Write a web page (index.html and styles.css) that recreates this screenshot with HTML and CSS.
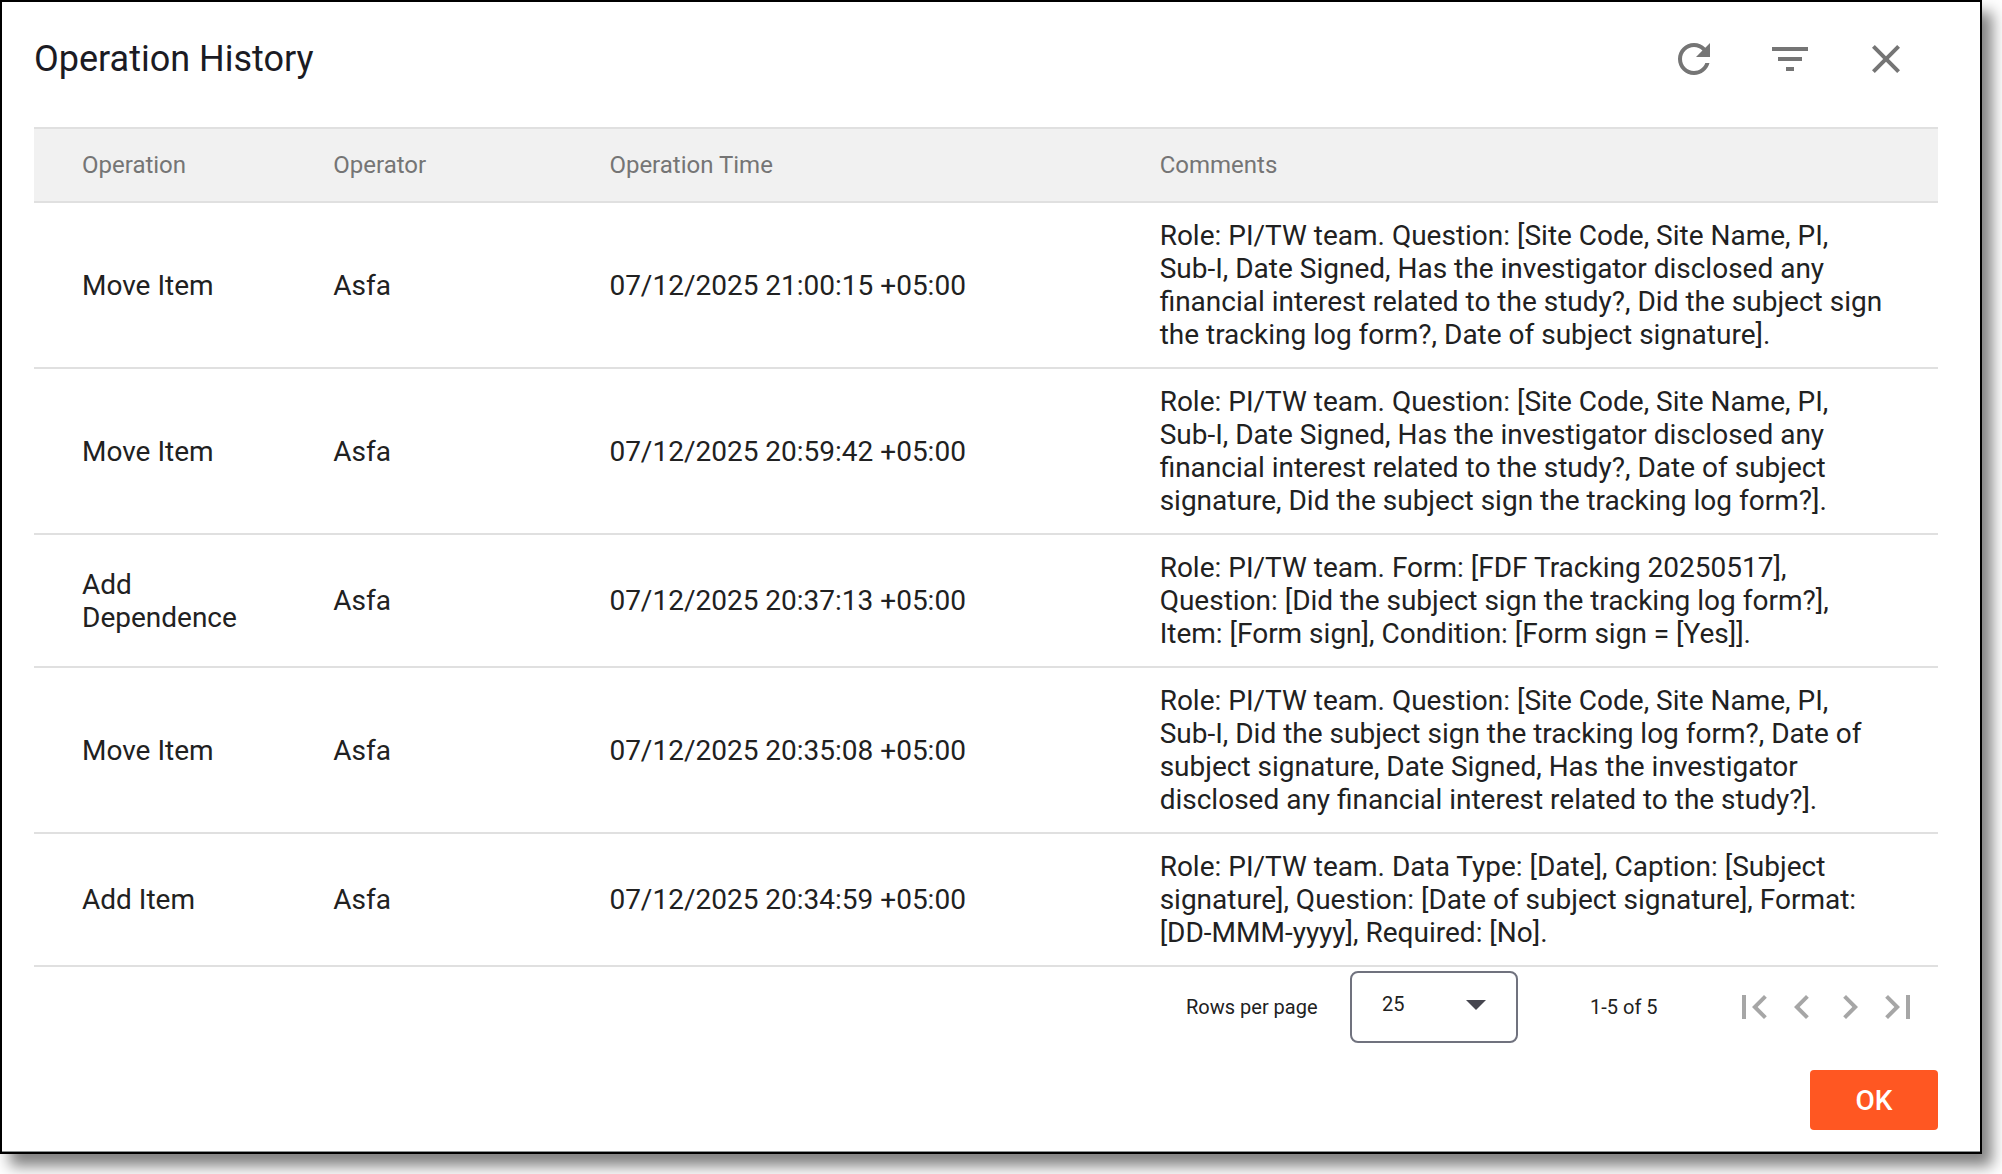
FILE: index.html
```html
<!DOCTYPE html>
<html lang="en">
<head>
<meta charset="utf-8">
<title>Operation History</title>
<link rel="stylesheet" href="styles.css">
</head>
<body>
<main class="dialog">
  <header class="dialog-header">
    <h1 class="dialog-title">Operation History</h1>
    <div class="dialog-tools">
      <button class="icon-button" type="button" aria-label="Refresh"><svg class="icon" viewBox="0 0 24 24"><path d="M17.65 6.35C16.2 4.9 14.21 4 12 4c-4.42 0-7.99 3.58-8 8s3.58 8 8 8c3.73 0 6.84-2.55 7.73-6h-2.08c-.82 2.33-3.04 4-5.65 4-3.31 0-6-2.69-6-6s2.69-6 6-6c1.66 0 3.14.69 4.22 1.78L13 11h7V4l-2.35 2.35z"/></svg></button>
      <button class="icon-button" type="button" aria-label="Filter"><svg class="icon" viewBox="0 0 24 24"><path d="M10 18h4v-2h-4v2zM3 6v2h18V6H3zm3 7h12v-2H6v2z"/></svg></button>
      <button class="icon-button" type="button" aria-label="Close"><svg class="icon" viewBox="0 0 24 24"><path d="M19 6.41L17.59 5 12 10.59 6.41 5 5 6.41 10.59 12 5 17.59 6.41 19 12 13.41 17.59 19 19 17.59 13.41 12z"/></svg></button>
    </div>
  </header>

  <table class="history">
    <colgroup>
      <col class="col-operation"><col class="col-operator"><col class="col-time"><col class="col-comments">
    </colgroup>
    <thead>
      <tr><th scope="col">Operation</th><th scope="col">Operator</th><th scope="col">Operation Time</th><th scope="col">Comments</th></tr>
    </thead>
    <tbody>
      <tr>
        <td>Move Item</td><td>Asfa</td><td>07/12/2025 21:00:15 +05:00</td>
        <td>Role: PI/TW team. Question: [Site Code, Site Name, PI, Sub-I, Date Signed, Has the investigator disclosed any financial interest related to the study?, Did the subject sign the tracking log form?, Date of subject signature].</td>
      </tr>
      <tr>
        <td>Move Item</td><td>Asfa</td><td>07/12/2025 20:59:42 +05:00</td>
        <td>Role: PI/TW team. Question: [Site Code, Site Name, PI, Sub-I, Date Signed, Has the investigator disclosed any financial interest related to the study?, Date of subject signature, Did the subject sign the tracking log form?].</td>
      </tr>
      <tr>
        <td>Add Dependence</td><td>Asfa</td><td>07/12/2025 20:37:13 +05:00</td>
        <td>Role: PI/TW team. Form: [FDF Tracking 20250517], Question: [Did the subject sign the tracking log form?], Item: [Form sign], Condition: [Form sign = [Yes]].</td>
      </tr>
      <tr>
        <td>Move Item</td><td>Asfa</td><td>07/12/2025 20:35:08 +05:00</td>
        <td>Role: PI/TW team. Question: [Site Code, Site Name, PI, Sub-I, Did the subject sign the tracking log form?, Date of subject signature, Date Signed, Has the investigator disclosed any financial interest related to the study?].</td>
      </tr>
      <tr>
        <td>Add Item</td><td>Asfa</td><td>07/12/2025 20:34:59 +05:00</td>
        <td>Role: PI/TW team. Data Type: [Date], Caption: [Subject signature], Question: [Date of subject signature], Format: [DD-MMM-yyyy], Required: [No].</td>
      </tr>
    </tbody>
  </table>

  <nav class="pagination" aria-label="Pagination">
    <label class="page-label" for="page-size">Rows per page</label>
    <div class="page-size">
      <select class="page-select" id="page-size"><option>25</option><option>50</option><option>100</option></select>
      <svg class="page-arrow" viewBox="0 0 20 10"><path d="M0 0h20L10 10z"/></svg>
    </div>
    <span class="page-range">1-5 of 5</span>
    <div class="page-nav">
      <button class="page-button" type="button" aria-label="First page" disabled><svg class="icon" viewBox="0 0 24 24"><path d="M18.41 16.59L13.82 12l4.59-4.59L17 6l-6 6 6 6zM6 6h2v12H6z"/></svg></button>
      <button class="page-button" type="button" aria-label="Previous page" disabled><svg class="icon" viewBox="0 0 24 24"><path d="M15.41 7.41L14 6l-6 6 6 6 1.41-1.41L10.83 12z"/></svg></button>
      <button class="page-button" type="button" aria-label="Next page" disabled><svg class="icon" viewBox="0 0 24 24"><path d="M10 6L8.59 7.41 13.17 12l-4.58 4.59L10 18l6-6z"/></svg></button>
      <button class="page-button" type="button" aria-label="Last page" disabled><svg class="icon" viewBox="0 0 24 24"><path d="M5.59 7.41L10.18 12l-4.59 4.59L7 18l6-6-6-6zM16 6h2v12h-2z"/></svg></button>
    </div>
  </nav>

  <footer class="dialog-footer">
    <button class="ok-button" type="button">OK</button>
  </footer>
</main>
</body>
</html>
```
FILE: styles.css
```css
* {
  box-sizing: border-box;
}

body {
  margin: 0;
  padding: 0 20px 20px 0;
  background: #fff;
  color: #212121;
  font-family: Roboto, "Liberation Sans", sans-serif;
  font-size: 28px;
  line-height: 33px;
}

button,
select {
  margin: 0;
  font-family: inherit;
}

.dialog {
  padding: 9px 42px 22px 32px;
  border: 2px solid #000;
  background: #fff;
  box-shadow: inset 0 -1px #8b9090, 10px 12px 14px rgba(0, 0, 0, 0.5);
}

.dialog-header {
  display: flex;
  align-items: center;
  justify-content: space-between;
  padding-right: 4px;
  margin-bottom: 20px;
}

.dialog-title {
  margin: 0;
  color: #1b1b23;
  font-size: 36px;
  font-weight: 400;
  line-height: 42px;
}

.dialog-tools,
.page-nav {
  display: flex;
}

.icon-button,
.page-button {
  display: grid;
  place-items: center;
  padding: 0;
  border: 0;
  background: none;
}

.icon-button {
  width: 96px;
  height: 96px;
  color: #757575;
}

.page-button {
  width: 48px;
  height: 48px;
  color: #a6a6a6;
}

.icon {
  width: 48px;
  height: 48px;
  fill: currentColor;
}

.history {
  width: 100%;
  border-collapse: separate;
  border-spacing: 0;
  table-layout: fixed;
}

.col-operation { width: 13.2%; }
.col-operator { width: 14.5%; }
.col-time { width: 28.9%; }
.col-comments { width: 43.4%; }

.history th,
.history td {
  padding: 16px 0 16px 48px;
  border-bottom: 2px solid #e0e0e0;
  text-align: left;
  vertical-align: middle;
}

.history th {
  height: 76px;
  border-top: 2px solid #e0e0e0;
  background: #f1f1f1;
  color: #757575;
  font-size: 24px;
  font-weight: 400;
}

.history td:first-child {
  padding-right: 32px;
}

.history td:last-child {
  padding-right: 48px;
}

.pagination {
  display: flex;
  align-items: center;
  justify-content: flex-end;
  padding: 4px 16px 0 0;
  font-size: 20px;
  line-height: 24px;
}

.page-label {
  min-width: 164px;
}

.page-size {
  display: grid;
  align-items: center;
  width: 168px;
  margin-right: 72px;
}

.page-select,
.page-arrow {
  grid-area: 1 / 1;
}

.page-select {
  width: 100%;
  height: 72px;
  padding: 0 32px 6px 30px;
  border: 2px solid #70727e;
  border-radius: 8px;
  appearance: none;
  background: none;
  color: #212121;
  font-size: 20px;
}

.page-arrow {
  justify-self: end;
  width: 20px;
  height: 10px;
  margin: 0 32px 4px 0;
  fill: #46464f;
  pointer-events: none;
}

.page-range {
  min-width: 140px;
}

.dialog-footer {
  display: flex;
  justify-content: flex-end;
  margin-top: 27px;
}

.ok-button {
  width: 128px;
  height: 60px;
  border: 0;
  border-radius: 4px;
  background: #ff5722;
  color: #fff;
  font-size: 28px;
  font-weight: 500;
}
```
